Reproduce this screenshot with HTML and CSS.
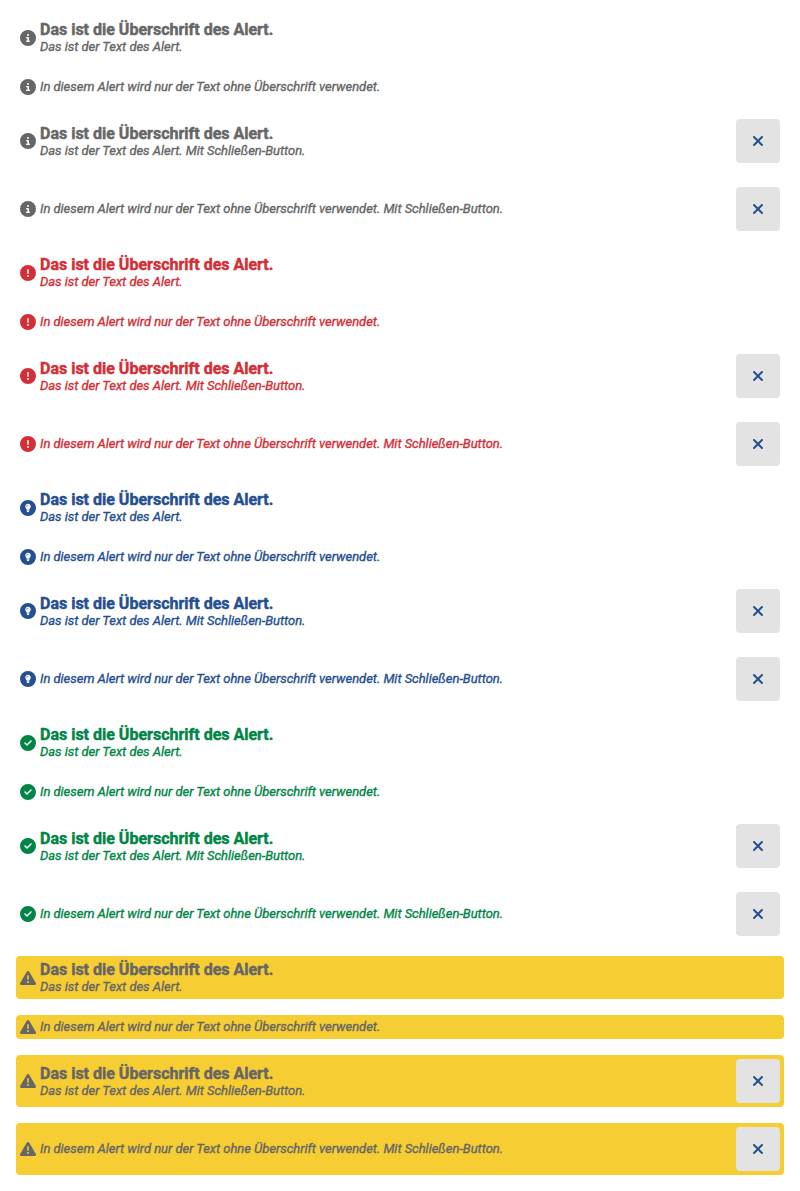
FILE: index.html
```
<!DOCTYPE html>
<html lang="de">
<head>
<meta charset="utf-8">
<title>Alerts</title>
<link rel="stylesheet" href="styles.css">
</head>
<body>
<svg class="sprite" aria-hidden="true">
  <symbol id="info" viewBox="0 0 512 512"><path d="M256 512A256 256 0 1 0 256 0a256 256 0 1 0 0 512zM216 336h24V272H216c-13.300 0-24-10.700-24-24s10.700-24 24-24h48c13.300 0 24 10.700 24 24v88h8c13.300 0 24 10.700 24 24s-10.700 24-24 24H216c-13.300 0-24-10.700-24-24s10.700-24 24-24zm40-208a32 32 0 1 1 0 64 32 32 0 1 1 0-64z"/></symbol>
  <symbol id="error" viewBox="0 0 512 512"><path d="M256 512A256 256 0 1 0 256 0a256 256 0 1 0 0 512zm0-384c13.300 0 24 10.700 24 24V264c0 13.300-10.700 24-24 24s-24-10.700-24-24V152c0-13.300 10.700-24 24-24zM224 352a32 32 0 1 1 64 0 32 32 0 1 1-64 0z"/></symbol>
  <symbol id="hint" viewBox="0 0 512 512"><path fill-rule="evenodd" d="M256 512A256 256 0 1 0 256 0a256 256 0 1 0 0 512zM256 120c50 0 88 38 88 86 0 28-12 46-25 64-10 13-17 26-21 42h-84c-4-16-11-29-21-42-13-18-25-36-25-64 0-48 38-86 88-86zM214 326h84v20c0 25-18 44-42 44s-42-19-42-44zM252 160c-26 0-46 20-46 45 0 6 4 9 8 9s8-3 8-9c0-16 13-29 30-29 5 0 8-3 8-8s-3-8-8-8z"/></symbol>
  <symbol id="success" viewBox="0 0 512 512"><path d="M256 512A256 256 0 1 0 256 0a256 256 0 1 0 0 512zM369 209L241 337c-9.400 9.400-24.600 9.400-33.900 0l-64-64c-9.400-9.400-9.400-24.600 0-33.900s24.600-9.400 33.900 0l47 47L335 175c9.400-9.400 24.600-9.400 33.900 0s9.400 24.600 0 33.900z"/></symbol>
  <symbol id="warning" viewBox="0 0 512 512"><path d="M256 32c14.200 0 27.300 7.500 34.500 19.800l216 368c7.300 12.400 7.300 27.700 .2 40.100S486.300 480 472 480H40c-14.300 0-27.600-7.700-34.700-20.100s-7-27.800 .2-40.100l216-368C228.700 39.500 241.800 32 256 32zm0 128c-13.300 0-24 10.700-24 24V296c0 13.300 10.700 24 24 24s24-10.700 24-24V184c0-13.300-10.700-24-24-24zm32 224a32 32 0 1 0-64 0 32 32 0 1 0 64 0z"/></symbol>
  <symbol id="close" viewBox="0 0 384 512"><path d="M342.600 150.600c12.500-12.500 12.500-32.800 0-45.300s-32.800-12.500-45.300 0L192 210.700 86.600 105.400c-12.500-12.500-32.800-12.500-45.300 0s-12.500 32.800 0 45.300L146.700 256 41.400 361.400c-12.500 12.500-12.500 32.800 0 45.300s32.800 12.500 45.300 0L192 301.300 297.400 406.600c12.500 12.500 32.800 12.500 45.300 0s12.500-32.800 0-45.300L237.300 256 342.600 150.600z"/></symbol>
</svg>
<main class="alerts" id="alerts"></main>
<script src="alerts.js"></script>
</body>
</html>
```
FILE: styles.css
```
body {
  margin: 0;
  padding: 16px;
  background: #fff;
  font-family: Roboto, "Liberation Sans", sans-serif;
}
.sprite {
  display: none;
}
.alerts {
  display: flex;
  flex-direction: column;
  gap: 16px;
}
.alert {
  display: flex;
  align-items: center;
  gap: 4px;
  padding: 4px;
  border-radius: 4px;
}
.alert-info { color: #666; }
.alert-error { color: #d22f37; }
.alert-hint { color: #254f90; }
.alert-success { color: #008547; }
.alert-warning { color: #666; background: #f7cd34; }
.icon {
  flex: none;
  width: 16px;
  height: 16px;
  fill: currentColor;
}
.content {
  flex: 1;
}
.heading {
  font-size: 16px;
  line-height: 19px;
  font-weight: 700;
  -webkit-text-stroke: 0.45px currentColor;
}
.text {
  font-size: 13px;
  line-height: 16px;
  font-weight: 400;
  font-style: italic;
  letter-spacing: -0.03px;
  -webkit-text-stroke: 0.35px currentColor;
}
.close {
  display: flex;
  align-items: center;
  justify-content: center;
  width: 44px;
  height: 44px;
  padding: 0;
  border: 0;
  border-radius: 4px;
  background: #e3e3e3;
  color: #254f90;
}
.close-icon {
  width: 12px;
  height: 16px;
  fill: currentColor;
}
```
FILE: alerts.js
```
const variants = ["info", "error", "hint", "success", "warning"];
const heading = '<div class="heading">Das ist die Überschrift des Alert.</div>';
const long = "In diesem Alert wird nur der Text ohne Überschrift verwendet.";
const short = "Das ist der Text des Alert.";
const closeText = " Mit Schließen-Button.";
const button = '<button class="close" type="button" aria-label="Schließen"><svg class="close-icon"><use href="#close"/></svg></button>';

function alertBox(type, withHeading, closable) {
  return `<div class="alert alert-${type}" role="alert">
    <svg class="icon"><use href="#${type}"/></svg>
    <div class="content">${withHeading ? heading : ""}
      <div class="text">${withHeading ? short : long}${closable ? closeText : ""}</div>
    </div>${closable ? button : ""}
  </div>`;
}

document.getElementById("alerts").innerHTML = variants.map(type =>
  alertBox(type, true, false) + alertBox(type, false, false) +
  alertBox(type, true, true) + alertBox(type, false, true)
).join("");
```
